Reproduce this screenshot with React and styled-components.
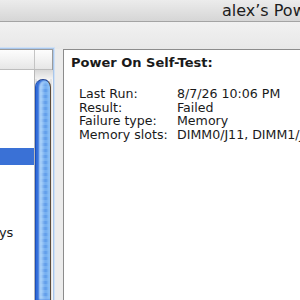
import React from "react";
import styled, { createGlobalStyle } from "styled-components";

const GlobalStyle = createGlobalStyle`
  html, body {
    margin: 0;
    padding: 0;
    width: 300px;
    height: 300px;
    overflow: hidden;
    background: #ececec;
    font-family: "DejaVu Sans", "Liberation Sans", sans-serif;
  }
`;

const Window = styled.div`
  width: 300px;
  height: 300px;
  display: flex;
  flex-direction: column;
  overflow: hidden;
`;

const TitleBar = styled.div`
  height: 21px;
  flex: none;
  display: flex;
  align-items: center;
  padding-left: 222px;
  white-space: nowrap;
  overflow: hidden;
  font-size: 16px;
  color: #1c1c1c;
  background: linear-gradient(#ececec, #d6d6d6);
  border-bottom: 1px solid #a4a4a4;
`;

const Toolbar = styled.div`
  height: 27px;
  flex: none;
  background: linear-gradient(#f1f1f1, #e8e8e8);
`;

const Content = styled.div`
  flex: 1;
  display: flex;
  gap: 11px;
  min-height: 0;
`;

const ListPanel = styled.div`
  width: 52px;
  flex: none;
  display: flex;
  flex-direction: column;
  margin-top: 1px;
  background: #fff;
  box-shadow: 0 0 0 1px #9b9b9b, 0 0 0 2px #a9c6ea, 0 0 0 3px #cfe0f4;
`;

const HeaderRow = styled.div`
  height: 19px;
  flex: none;
  display: flex;
  background: linear-gradient(#fdfdfd, #f1f1f1 55%, #e6e6e6);
  border-bottom: 1px solid #bdbdbd;
`;

const HeaderCell = styled.div`
  width: ${(p) => p.$w}px;
  flex: none;
  border-right: ${(p) => (p.$divider ? "1px solid #c4c4c4" : "none")};
`;

const ListBody = styled.div`
  flex: 1;
  display: flex;
  min-height: 0;
`;

const Rows = styled.div`
  width: 34px;
  flex: none;
  padding-top: 78px;
  overflow: hidden;
`;

const Row = styled.div`
  height: 17px;
  margin-bottom: ${(p) => p.$after || 0}px;
  display: flex;
  align-items: center;
  font-size: 13px;
  white-space: nowrap;
  color: #1a1a1a;
  background: ${(p) => (p.$selected ? "#3a71d6" : "transparent")};
`;

const Clipped = styled.span`
  margin-left: -17px;
  padding-top: 2px;
`;

const ScrollBar = styled.div`
  width: 18px;
  flex: none;
  display: flex;
  flex-direction: column;
  background: repeating-linear-gradient(90deg, #e4e4e4 0 2px, #f4f4f4 2px 5px);
  border-left: 1px solid #b8b8b8;
`;

const ScrollCap = styled.div`
  height: 9px;
  flex: none;
  background: linear-gradient(#d8d8d8, #f2f2f2);
`;

const Thumb = styled.div`
  flex: 1;
  margin: 0 2px 0 0;
  border-radius: 8px 8px 0 0;
  border-left: 1px solid #1d4fb8;
  border-right: 1px solid #5a4a3a;
  border-top: 1px solid #1d3f90;
  background: repeating-linear-gradient(#6aa6ee 0 3px, #4f8fe6 3px 6px);
  box-shadow: inset 3px 0 2px #2f6ad8, inset -3px 0 3px #8cc0f6, inset 7px 0 4px #b9dcfc;
`;

const DetailPanel = styled.div`
  flex: 1;
  background: #fff;
  border: 1px solid #8c8c8c;
  border-right: none;
  border-bottom: none;
  padding: 5px 0 0 7px;
  font-size: 13px;
  color: #1a1a1a;
  white-space: nowrap;
  overflow: hidden;
`;

const Heading = styled.div`
  font-weight: bold;
  line-height: 15px;
  margin-bottom: 17px;
`;

const InfoGrid = styled.div`
  display: grid;
  grid-template-columns: 98px auto;
  padding-left: 8px;
  line-height: 13.7px;
  font-size: 12.6px;
`;

const info = [
  ["Last Run:", "8/7/26 10:06 PM"],
  ["Result:", "Failed"],
  ["Failure type:", "Memory"],
  ["Memory slots:", "DIMM0/J11, DIMM1/J12"],
];

export default function App() {
  return (
    <>
      <GlobalStyle />
      <Window>
        <TitleBar>alex’s PowerBook G4</TitleBar>
        <Toolbar />
        <Content>
          <ListPanel>
            <HeaderRow>
              <HeaderCell $w={34} $divider />
              <HeaderCell $w={18} />
            </HeaderRow>
            <ListBody>
              <Rows>
                <Row $selected $after={58} />
                <Row>
                  <Clipped>Keys</Clipped>
                </Row>
              </Rows>
              <ScrollBar>
                <ScrollCap />
                <Thumb />
              </ScrollBar>
            </ListBody>
          </ListPanel>
          <DetailPanel>
            <Heading>Power On Self-Test:</Heading>
            <InfoGrid>
              {info.map(([label, value]) => (
                <React.Fragment key={label}>
                  <span>{label}</span>
                  <span>{value}</span>
                </React.Fragment>
              ))}
            </InfoGrid>
          </DetailPanel>
        </Content>
      </Window>
    </>
  );
}
